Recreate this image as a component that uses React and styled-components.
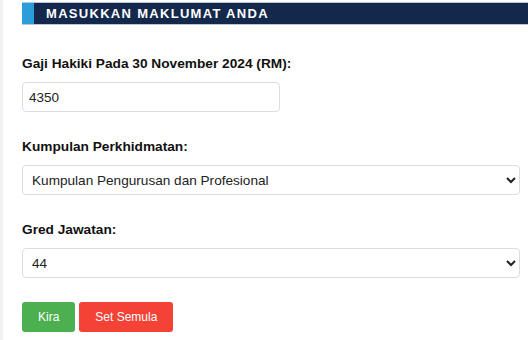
import React from "react";
import styled, { createGlobalStyle } from "styled-components";

const GlobalStyle = createGlobalStyle`
  body {
    margin: 0;
    background: #f1f1f1;
    font-family: "Liberation Sans", Arial, sans-serif;
  }
`;

const Page = styled.div`
  margin-left: 3px;
  min-height: 340px;
  background: #ffffff;
  padding: 3px 0 0 19px;
  box-sizing: border-box;
  overflow: hidden;
`;

const Header = styled.div`
  height: 21px;
  background: #14284c;
  border-left: 12px solid #2b9ddb;
  box-shadow: 0 1px 0 #b9c6d8, 0 -1px 0 #b9c6d8;
  display: flex;
  align-items: center;
  padding-left: 12px;
  margin-right: -10px;
`;

const HeaderTitle = styled.h2`
  margin: 0;
  color: #ffffff;
  font-size: 13px;
  font-weight: bold;
  letter-spacing: 1.3px;
`;

const Form = styled.form`
  padding: 32px 8px 0 0;
  display: flex;
  flex-direction: column;
`;

const Field = styled.div`
  display: flex;
  flex-direction: column;
  margin-bottom: 27px;
`;

const Label = styled.label`
  font-size: 13.7px;
  font-weight: bold;
  color: #111;
  margin-bottom: 10px;
  line-height: 16px;
`;

const TextInput = styled.input`
  width: 258px;
  height: 30px;
  box-sizing: border-box;
  border: 1px solid #dcdcdc;
  border-radius: 4px;
  padding: 0 6px;
  font-family: inherit;
  font-size: 13.5px;
  color: #222;
`;

const Select = styled.select`
  width: 100%;
  height: 30px;
  box-sizing: border-box;
  border: 1px solid #dcdcdc;
  border-radius: 4px;
  padding: 0 5px;
  font-family: inherit;
  font-size: 13.6px;
  color: #222;
  background: #fff;
`;

const Buttons = styled.div`
  display: flex;
  gap: 4px;
  margin-top: -3px;
`;

const Button = styled.button`
  height: 30px;
  padding: 0 16px;
  border: none;
  border-radius: 3px;
  background: ${(p) => p.$bg};
  color: #fff;
  font-family: inherit;
  font-size: 12px;
`;

export default function App() {
  return (
    <>
      <GlobalStyle />
      <Page>
        <Header>
          <HeaderTitle>MASUKKAN MAKLUMAT ANDA</HeaderTitle>
        </Header>
        <Form onSubmit={(e) => e.preventDefault()}>
          <Field>
            <Label>Gaji Hakiki Pada 30 November 2024 (RM):</Label>
            <TextInput defaultValue="4350" />
          </Field>
          <Field>
            <Label>Kumpulan Perkhidmatan:</Label>
            <Select defaultValue="pp">
              <option value="pp">Kumpulan Pengurusan dan Profesional</option>
            </Select>
          </Field>
          <Field>
            <Label>Gred Jawatan:</Label>
            <Select defaultValue="44">
              <option value="44">44</option>
            </Select>
          </Field>
          <Buttons>
            <Button $bg="#4caf50">Kira</Button>
            <Button $bg="#f44336">Set Semula</Button>
          </Buttons>
        </Form>
      </Page>
    </>
  );
}
